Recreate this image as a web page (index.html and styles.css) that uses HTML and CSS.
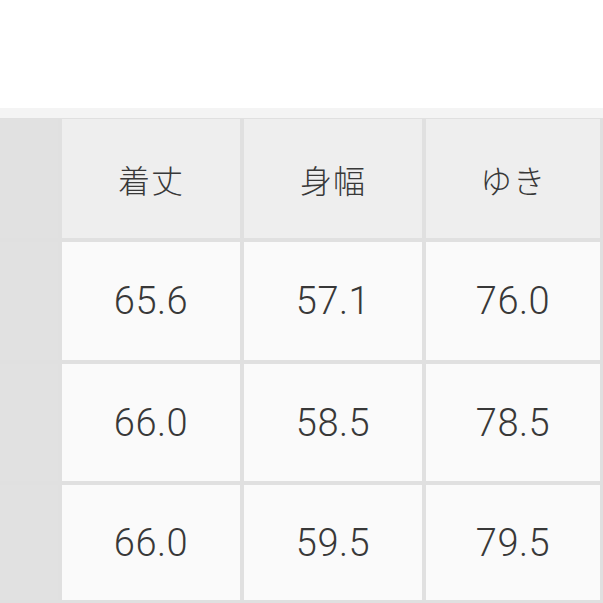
FILE: index.html
```html
<!DOCTYPE html>
<html lang="ja">
<head>
<meta charset="utf-8">
<link rel="stylesheet" href="styles.css">
</head>
<body>
<div class="page">
  <div class="band"></div>
  <div class="table">
    <div class="cell side"></div>
    <div class="cell head">着丈</div>
    <div class="cell head">身幅</div>
    <div class="cell head">ゆき</div>

    <div class="cell side"></div>
    <div class="cell data">65.6</div>
    <div class="cell data">57.1</div>
    <div class="cell data">76.0</div>

    <div class="cell side"></div>
    <div class="cell data">66.0</div>
    <div class="cell data">58.5</div>
    <div class="cell data">78.5</div>

    <div class="cell side"></div>
    <div class="cell data">66.0</div>
    <div class="cell data">59.5</div>
    <div class="cell data">79.5</div>
  </div>
</div>
</body>
</html>
```

FILE: styles.css
```css
html, body {
  margin: 0;
  padding: 0;
  background: #ffffff;
}
.page {
  width: 603px;
  height: 603px;
  padding-top: 108px;
  box-sizing: border-box;
  overflow: hidden;
}
.band {
  height: 10px;
  background: #f4f4f4;
}
.table {
  display: grid;
  grid-template-columns: 58px 178px 178px 1fr;
  grid-template-rows: 119px 118px 117px 115px;
  column-gap: 4px;
  row-gap: 4px;
  padding-top: 1px;
  padding-right: 3px;
  padding-bottom: 3px;
  background: #e0e0e0;
}
.cell {
  display: flex;
  align-items: center;
  justify-content: center;
  color: #383838;
}
.side {
  background: #e1e1e1;
}
.head {
  background: #eeeeee;
  font-family: "Noto Sans CJK JP", sans-serif;
  font-weight: 300;
  font-size: 32px;
  letter-spacing: 1px;
}
.data {
  background: #fafafa;
  font-family: Roboto, "Liberation Sans", sans-serif;
  font-weight: 300;
  font-size: 38px;
  letter-spacing: 0.5px;
}
```
